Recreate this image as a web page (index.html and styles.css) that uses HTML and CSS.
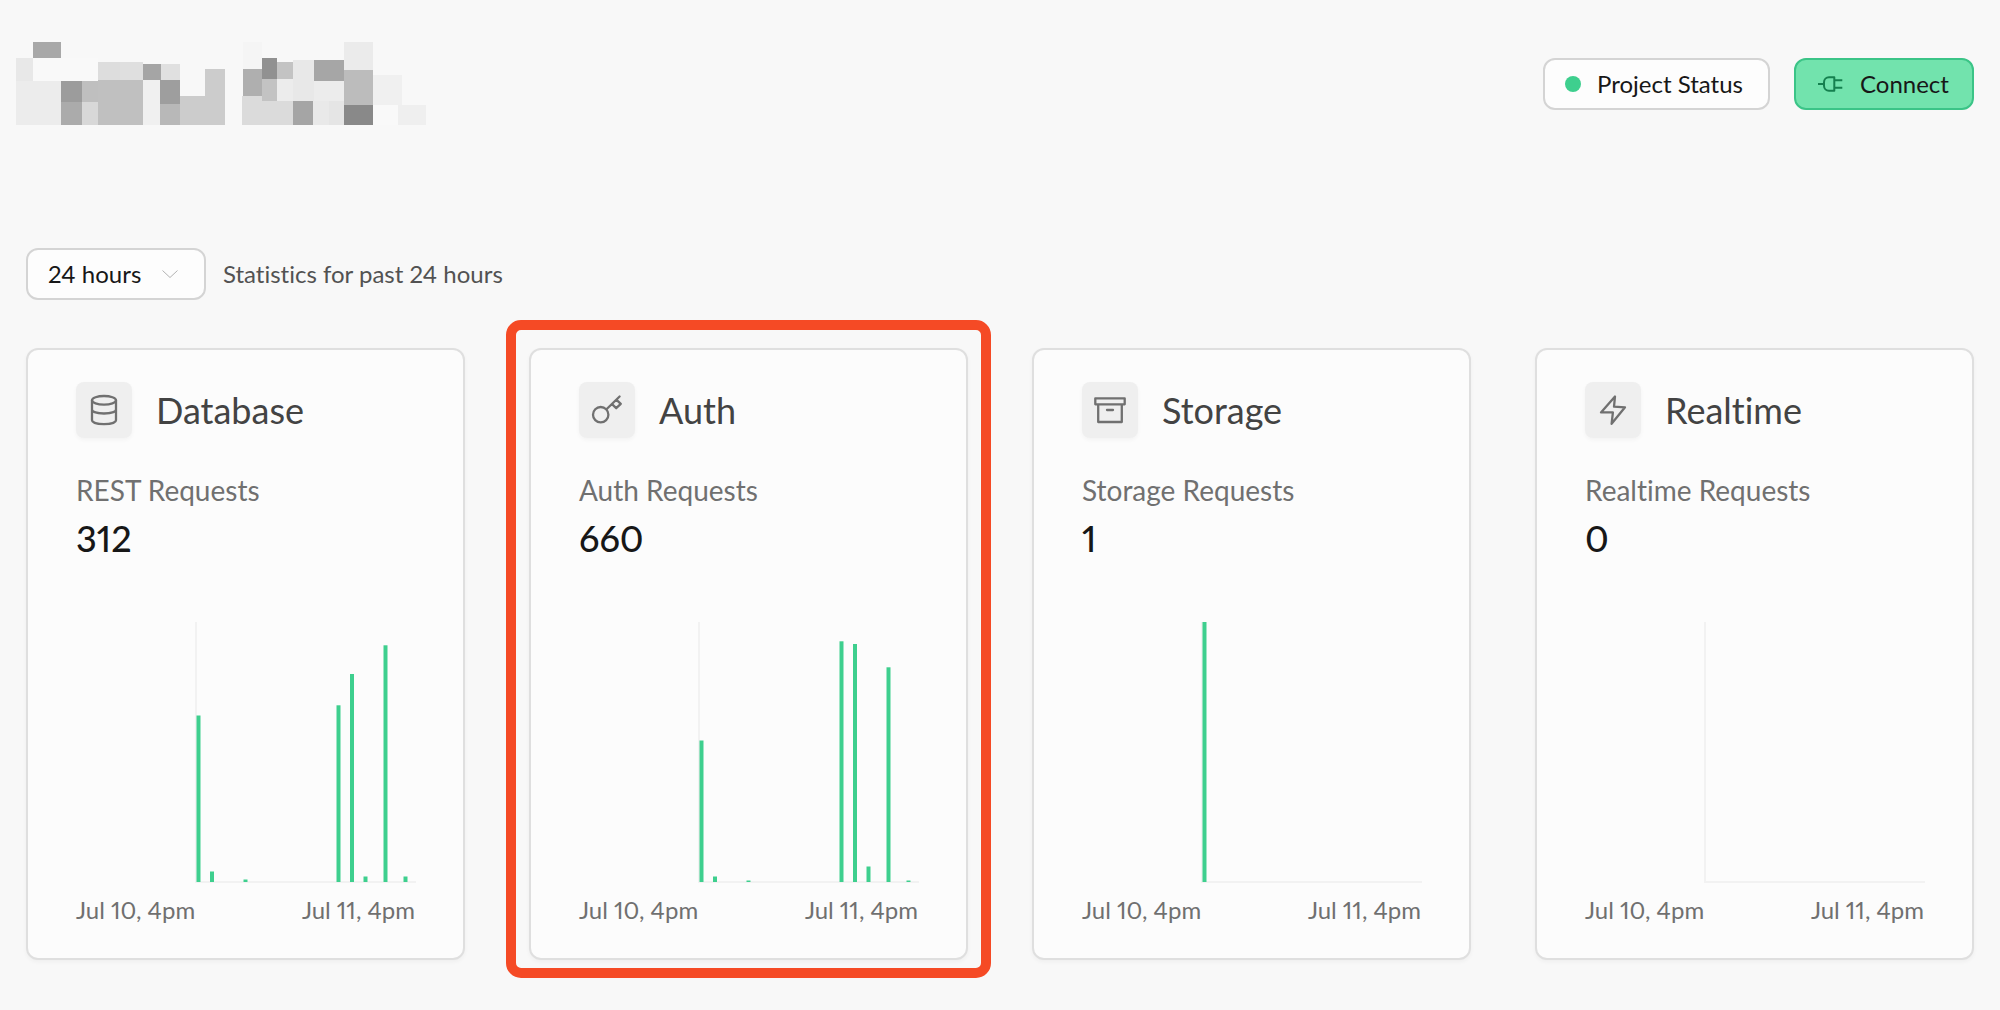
FILE: index.html
```html
<!DOCTYPE html>
<html lang="en">
<head>
<meta charset="utf-8">
<meta name="viewport" content="width=device-width, initial-scale=1">
<title>Project overview</title>
<link rel="stylesheet" href="styles.css">
</head>
<body>
<header class="page-header">
  <svg class="project-name" viewBox="0 0 410 83" shape-rendering="crispEdges" role="img" aria-label="Project name hidden">
    <rect x="17" y="16" width="65" height="23" fill="#f9f9f9"/>
    <rect x="17" y="0" width="28" height="16" fill="#a8a8a8"/>
    <rect x="0" y="16" width="17" height="23" fill="#e8e8e8"/>
    <rect x="0" y="39" width="45" height="44" fill="#ececec"/>
    <rect x="45" y="39" width="21" height="21" fill="#9c9c9c"/>
    <rect x="66" y="39" width="16" height="21" fill="#bfbfbf"/>
    <rect x="45" y="60" width="21" height="23" fill="#ababab"/>
    <rect x="66" y="60" width="16" height="23" fill="#d8d8d8"/>
    <rect x="82" y="20" width="22" height="18" fill="#dddddd"/>
    <rect x="104" y="20" width="23" height="18" fill="#dfdfdf"/>
    <rect x="82" y="38" width="45" height="45" fill="#c0c0c0"/>
    <rect x="127" y="22" width="18" height="16" fill="#a5a5a5"/>
    <rect x="145" y="22" width="19" height="16" fill="#e0e0e0"/>
    <rect x="127" y="38" width="17" height="45" fill="#f0f0f0"/>
    <rect x="144" y="38" width="20" height="24" fill="#9e9e9e"/>
    <rect x="144" y="62" width="20" height="21" fill="#b8b8b8"/>
    <rect x="164" y="54" width="25" height="29" fill="#cccccc"/>
    <rect x="189" y="27" width="20" height="56" fill="#cccccc"/>
    <rect x="227" y="0" width="19" height="27" fill="#f5f5f5"/>
    <rect x="227" y="27" width="19" height="27" fill="#afafaf"/>
    <rect x="226" y="54" width="51" height="29" fill="#dbdbdb"/>
    <rect x="246" y="16" width="15" height="21" fill="#919191"/>
    <rect x="261" y="20" width="16" height="17" fill="#c3c3c3"/>
    <rect x="246" y="37" width="15" height="22" fill="#c3c3c3"/>
    <rect x="261" y="37" width="16" height="22" fill="#ececec"/>
    <rect x="277" y="18" width="21" height="41" fill="#e8e8e8"/>
    <rect x="298" y="18" width="30" height="21" fill="#a6a6a6"/>
    <rect x="298" y="39" width="30" height="20" fill="#ececec"/>
    <rect x="277" y="59" width="20" height="24" fill="#a5a5a5"/>
    <rect x="297" y="59" width="16" height="24" fill="#e9e9e9"/>
    <rect x="313" y="59" width="15" height="24" fill="#e5e5e5"/>
    <rect x="328" y="0" width="29" height="28" fill="#ebebeb"/>
    <rect x="328" y="28" width="29" height="35" fill="#bcbcbc"/>
    <rect x="328" y="63" width="29" height="20" fill="#898989"/>
    <rect x="357" y="33" width="29" height="30" fill="#f0f0f0"/>
    <rect x="357" y="63" width="25" height="20" fill="#f9f9f9"/>
    <rect x="382" y="63" width="28" height="20" fill="#efefef"/>
  </svg>
  <div class="actions">
    <button type="button" class="button button-status"><span class="status-dot"></span>Project Status</button>
    <button type="button" class="button button-connect">
      <svg class="plug" viewBox="0 0 28 28" aria-hidden="true"><path d="M2 14h6M18.300 7.300h-5.300a5 5 0 0 0-5 5v3.400a5 5 0 0 0 5 5h5.300zM18.300 10.300h8M18.300 17.700h8"/></svg>
      Connect
    </button>
  </div>
</header>

<main>
  <div class="toolbar">
    <div class="range">
      <select class="range-select" aria-label="Time range">
        <option>24 hours</option>
        <option>7 days</option>
        <option>60 minutes</option>
      </select>
      <svg class="chevron" viewBox="0 0 16 8" aria-hidden="true"><path d="M.5.500 8 7.500l7.500-7"/></svg>
    </div>
    <p class="range-note">Statistics for past 24 hours</p>
  </div>

  <div class="cards">
    <section class="card">
      <header class="card-header">
        <span class="card-icon"><svg viewBox="0 0 32 32" aria-hidden="true"><ellipse cx="16" cy="6.300" rx="12" ry="4.300"/><path d="M4 6.300v20c0 2.400 5.400 3.800 12 3.800s12-1.400 12-3.800v-20M4 15.500c0 2.400 5.400 4 12 4s12-1.600 12-4"/></svg></span>
        <h2 class="card-title">Database</h2>
      </header>
      <p class="metric-label">REST Requests</p>
      <p class="metric-value">312</p>
      <svg class="chart" viewBox="0 0 339 264" role="img" aria-label="REST requests per hour">
        <path class="axis" d="M120 2v260M119 262h221"/>
        <g class="bars">
          <rect x="120.500" y="95.500" width="4" height="166.500"/>
          <rect x="134" y="251.500" width="4" height="10.500"/>
          <rect x="167.500" y="259.500" width="4" height="2.500"/>
          <rect x="260.500" y="85.300" width="4" height="176.700"/>
          <rect x="274" y="54" width="4" height="208"/>
          <rect x="287.500" y="256.500" width="4" height="5.500"/>
          <rect x="307.500" y="25.300" width="4" height="236.700"/>
          <rect x="327.500" y="256.500" width="4" height="5.500"/>
        </g>
      </svg>
      <div class="dates"><span>Jul 10, 4pm</span><span>Jul 11, 4pm</span></div>
    </section>

    <section class="card card-highlighted">
      <header class="card-header">
        <span class="card-icon"><svg viewBox="0 0 32 32" aria-hidden="true"><circle cx="9.700" cy="20.700" r="7.700"/><path d="M15.500 15.300 28.600 2.500M25.500 5.800l4.300 4-4.600 4.400-4.200-4"/></svg></span>
        <h2 class="card-title">Auth</h2>
      </header>
      <p class="metric-label">Auth Requests</p>
      <p class="metric-value">660</p>
      <svg class="chart" viewBox="0 0 339 264" role="img" aria-label="Auth requests per hour">
        <path class="axis" d="M120 2v260M119 262h221"/>
        <g class="bars">
          <rect x="120.500" y="120.500" width="4" height="141.500"/>
          <rect x="134" y="256.500" width="4" height="5.500"/>
          <rect x="167.500" y="260.500" width="4" height="1.500"/>
          <rect x="260.500" y="21.300" width="4" height="240.700"/>
          <rect x="274" y="24" width="4" height="238"/>
          <rect x="287.500" y="246.500" width="4" height="15.500"/>
          <rect x="307.500" y="47.300" width="4" height="214.700"/>
          <rect x="327.500" y="260.500" width="4" height="1.500"/>
        </g>
      </svg>
      <div class="dates"><span>Jul 10, 4pm</span><span>Jul 11, 4pm</span></div>
    </section>

    <section class="card">
      <header class="card-header">
        <span class="card-icon"><svg viewBox="0 0 32 32" aria-hidden="true"><path d="M1.300 4.300h29.400v6H1.300zM4.200 10.300V28h23.600V10.300M13 16h6"/></svg></span>
        <h2 class="card-title">Storage</h2>
      </header>
      <p class="metric-label">Storage Requests</p>
      <p class="metric-value">1</p>
      <svg class="chart" viewBox="0 0 339 264" role="img" aria-label="Storage requests per hour">
        <path class="axis" d="M120 2v260M119 262h221"/>
        <g class="bars"><rect x="120.500" y="2" width="4" height="260"/></g>
      </svg>
      <div class="dates"><span>Jul 10, 4pm</span><span>Jul 11, 4pm</span></div>
    </section>

    <section class="card">
      <header class="card-header">
        <span class="card-icon"><svg viewBox="0 0 32 32" aria-hidden="true"><path d="M18 2.500 17 12.700l11 .6L14.600 29.800l1.300-11.400H4z"/></svg></span>
        <h2 class="card-title">Realtime</h2>
      </header>
      <p class="metric-label">Realtime Requests</p>
      <p class="metric-value">0</p>
      <svg class="chart" viewBox="0 0 339 264" role="img" aria-label="Realtime requests per hour">
        <path class="axis" d="M120 2v260M119 262h221"/>
      </svg>
      <div class="dates"><span>Jul 10, 4pm</span><span>Jul 11, 4pm</span></div>
    </section>
  </div>
</main>
</body>
</html>
```
FILE: styles.css
```css
* {
  box-sizing: border-box;
}

body {
  margin: 0;
  padding: 42px 26px 48px;
  background: #f8f8f8;
  color: #171717;
  font-family: Lato, "Liberation Sans", sans-serif;
  font-size: 24px;
  font-variant-ligatures: no-common-ligatures;
  font-variant-numeric: proportional-nums;
  line-height: 32px;
}

h2,
p {
  margin: 0;
  font-weight: 400;
}

.page-header {
  display: flex;
  align-items: center;
  justify-content: space-between;
  margin: 0 0 123px -10px;
}

.project-name {
  display: block;
  width: 410px;
  height: 83px;
}

.actions {
  display: flex;
  gap: 24px;
}

.button {
  display: flex;
  align-items: center;
  gap: 16px;
  height: 52px;
  padding: 0 20px;
  border: 2px solid #d4d4d4;
  border-radius: 12px;
  background: #fdfdfd;
  color: #171717;
  font: inherit;
}

.button-status {
  min-width: 227px;
}

.status-dot {
  width: 16px;
  height: 16px;
  border-radius: 50%;
  background: #3ecf8e;
}

.button-connect {
  min-width: 180px;
  border-color: #3bc487;
  background: #72e3ad;
}

.plug {
  width: 28px;
  height: 28px;
  fill: none;
  stroke: #15804f;
  stroke-width: 2;
  stroke-linejoin: round;
}

.toolbar {
  display: flex;
  align-items: center;
  gap: 17px;
  margin-bottom: 48px;
}

.range {
  position: relative;
}

.range-select {
  appearance: none;
  display: block;
  width: 180px;
  height: 52px;
  padding: 0 56px 0 20px;
  border: 2px solid #d4d4d4;
  border-radius: 12px;
  background: #fdfdfd;
  color: #171717;
  font: inherit;
}

.chevron {
  position: absolute;
  top: 22px;
  right: 28px;
  width: 16px;
  height: 8px;
  fill: none;
  stroke: #b2b2b2;
  pointer-events: none;
}

.range-note {
  color: #525252;
}

.cards {
  display: grid;
  grid-template-columns: repeat(4, 1fr);
  gap: 64px;
}

.card {
  position: relative;
  padding: 32px 48px;
  border: 2px solid #dfdfdf;
  border-radius: 12px;
  background: #fcfcfc;
  box-shadow: 0 2px 4px rgb(0 0 0 / 4%);
}

.card-highlighted::after {
  content: "";
  position: absolute;
  inset: -30px -25px -20px;
  border: 10px solid #f54a25;
  border-radius: 15px;
  pointer-events: none;
}

.card-header {
  display: flex;
  align-items: center;
  gap: 24px;
  margin-bottom: 28px;
}

.card-icon {
  display: grid;
  place-items: center;
  width: 56px;
  height: 56px;
  border-radius: 8px;
  background: #efefef;
  box-shadow: 0 2px 4px rgb(0 0 0 / 4%);
}

.card-icon svg {
  width: 32px;
  height: 32px;
  fill: none;
  stroke: #707070;
  stroke-width: 2.3;
  stroke-linejoin: round;
  stroke-linecap: round;
}

.card-title {
  color: #434343;
  font-size: 36px;
  line-height: 48px;
}

.metric-label {
  color: #707070;
  font-size: 28px;
  line-height: 48px;
}

.metric-value {
  font-size: 36px;
  font-weight: 500;
  line-height: 48px;
}

.chart {
  display: block;
  width: 100%;
  height: auto;
  margin: 58px 0 10px;
  overflow: visible;
}

.axis {
  fill: none;
  stroke: #f2f2f2;
  stroke-width: 2;
}

.bars {
  fill: #3ecf8e;
}

.dates {
  display: flex;
  justify-content: space-between;
  color: #707070;
}
```
